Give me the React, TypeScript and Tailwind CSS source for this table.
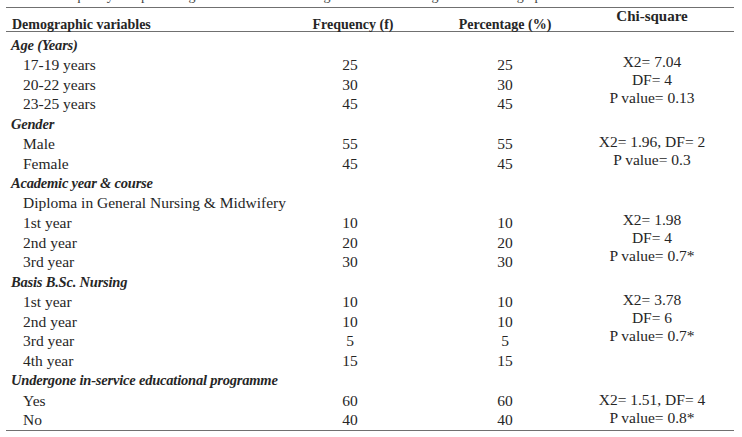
import React from 'react';

type Row = { label: string; f?: string; p?: string };

type Section = {
  title: string;
  rows: Row[];
  chi: string[];
  chiPad: string;
};

const sections: Section[] = [
  {
    title: 'Age (Years)',
    rows: [
      { label: '17-19 years', f: '25', p: '25' },
      { label: '20-22 years', f: '30', p: '30' },
      { label: '23-25 years', f: '45', p: '45' },
    ],
    chi: ['X2= 7.04', 'DF= 4', 'P value= 0.13'],
    chiPad: 'pt-[18px]',
  },
  {
    title: 'Gender',
    rows: [
      { label: 'Male', f: '55', p: '55' },
      { label: 'Female', f: '45', p: '45' },
    ],
    chi: ['X2= 1.96, DF= 2', 'P value= 0.3'],
    chiPad: 'pt-[19px]',
  },
  {
    title: 'Academic year & course',
    rows: [
      { label: 'Diploma in General Nursing & Midwifery' },
      { label: '1st year', f: '10', p: '10' },
      { label: '2nd year', f: '20', p: '20' },
      { label: '3rd year', f: '30', p: '30' },
    ],
    chi: ['X2= 1.98', 'DF= 4', 'P value= 0.7*'],
    chiPad: 'pt-[38px]',
  },
  {
    title: 'Basis B.Sc. Nursing',
    rows: [
      { label: '1st year', f: '10', p: '10' },
      { label: '2nd year', f: '10', p: '10' },
      { label: '3rd year', f: '5', p: '5' },
      { label: '4th year', f: '15', p: '15' },
    ],
    chi: ['X2= 3.78', 'DF= 6', 'P value= 0.7*'],
    chiPad: 'pt-[19px]',
  },
  {
    title: 'Undergone in-service educational programme',
    rows: [
      { label: 'Yes', f: '60', p: '60' },
      { label: 'No', f: '40', p: '40' },
    ],
    chi: ['X2= 1.51, DF= 4', 'P value= 0.8*'],
    chiPad: 'pt-[20px]',
  },
];

const DataRow = ({ row }: { row: Row }) => (
  <div className="flex h-[19.75px] items-center">
    <div className="w-[266px] pl-[17px] whitespace-nowrap">{row.label}</div>
    <div className="w-[156px] text-center">{row.f}</div>
    <div className="w-[154px] text-center">{row.p}</div>
  </div>
);

export default function App() {
  return (
    <div className="w-[742px] h-[437px] overflow-hidden bg-white font-['Liberation_Serif',serif] text-[15.5px] leading-none text-[#262626]">
      {/* caption of the table, cut off by the top edge of the picture */}
      <div className="h-[7px] overflow-hidden pl-[6px]">
        <p className="-mt-[12px] whitespace-nowrap text-[14px] leading-[16px] text-[#444]">
          Table 1: Frequency and percentage distribution of nursing students according to their demographic variables
        </p>
      </div>

      <div className="mx-[6px] w-[728px] border-y border-[#707070]">
        <div className="flex h-[24px] border-b border-[#707070] font-bold text-[14px]">
          <div className="w-[266px] pl-[6px] pt-[10px]">Demographic variables</div>
          <div className="w-[156px] pt-[10px] pl-[6px] text-center">Frequency (f)</div>
          <div className="w-[154px] pt-[10px] text-center">Percentage (%)</div>
          <div className="w-[140px] pt-[1px] text-center text-[15px]">Chi-square</div>
        </div>

        <div className="pt-[3px]">
          {sections.map((s) => (
            <div key={s.title} className="flex">
              <div className="w-[576px]">
                <div className="flex h-[19.75px] items-center pl-[5px] text-[14.5px] font-bold italic tracking-[-0.2px] whitespace-nowrap">
                  {s.title}
                </div>
                {s.rows.map((r, i) => (
                  <DataRow key={i} row={r} />
                ))}
              </div>
              <div className={`w-[140px] flex flex-col items-center ${s.chiPad}`}>
                {s.chi.map((c) => (
                  <div key={c} className="h-[18px] leading-[18px] whitespace-nowrap">
                    {c}
                  </div>
                ))}
              </div>
            </div>
          ))}
        </div>
      </div>
    </div>
  );
}
